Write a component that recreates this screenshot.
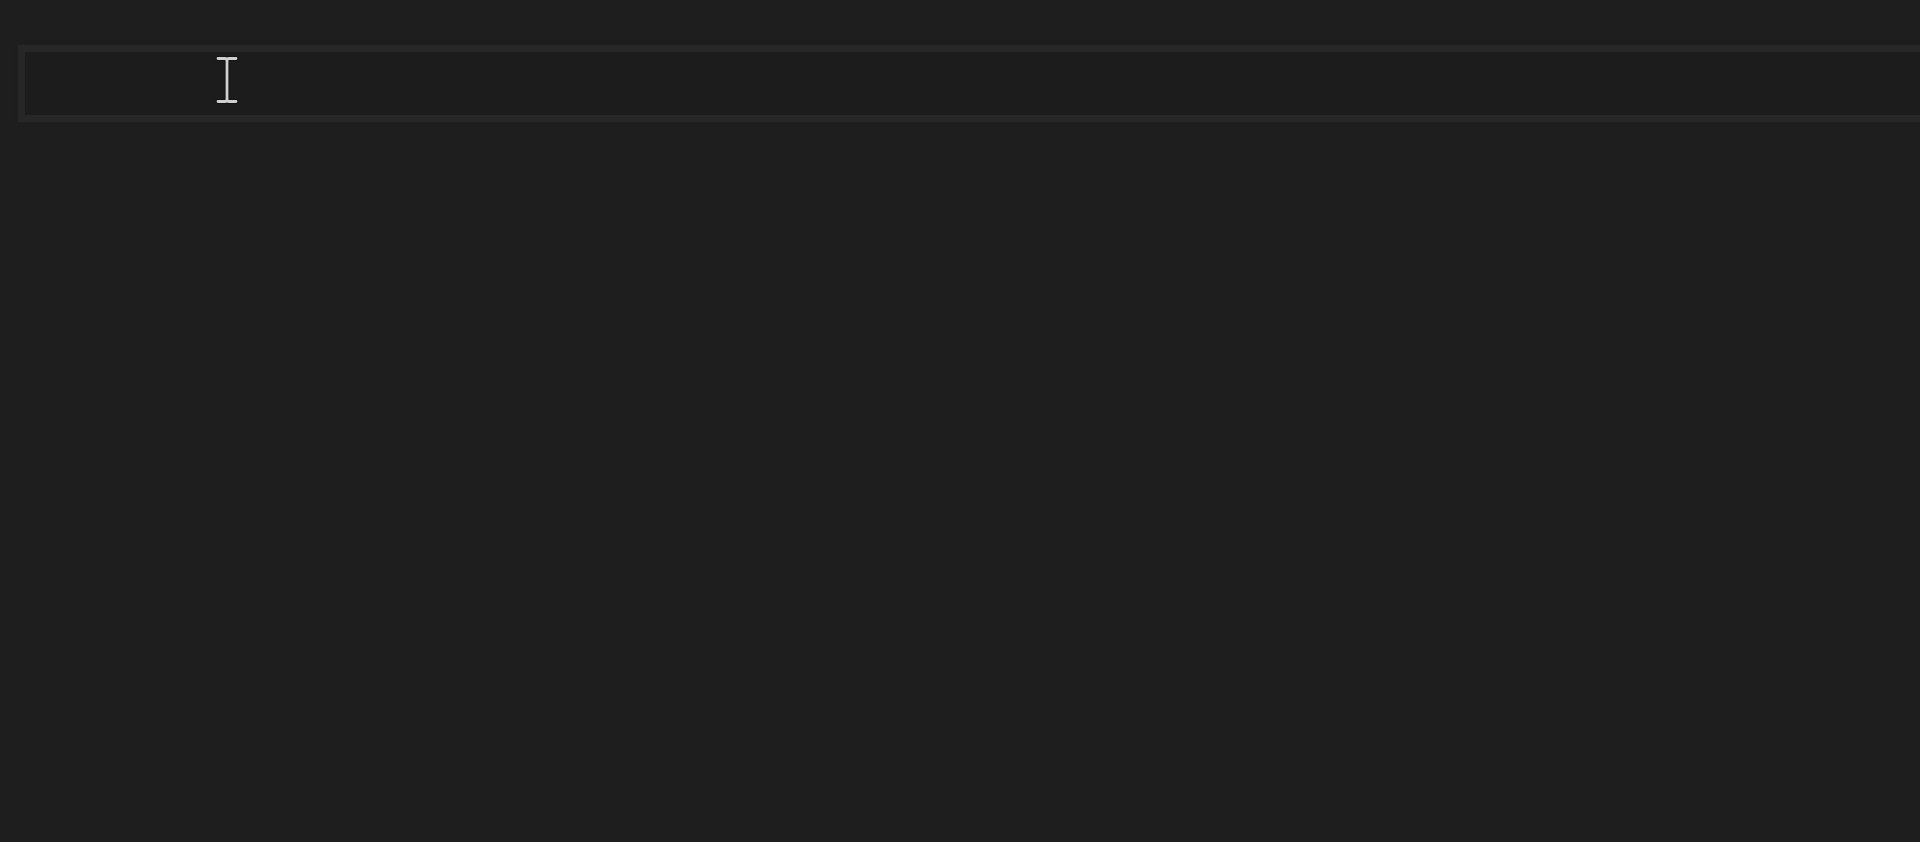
import React from 'react';

// I-beam text cursor hovering over the field
const IBeam = () => (
  <svg width="24" height="50" viewBox="0 0 24 50" className="absolute left-[215px] top-[55px]">
    <path d="M3 3.5 H10 Q12 3.5 12 6 V44 Q12 46.5 10 46.5 H3 M21 3.5 H14 Q12 3.5 12 6 M12 44 Q12 46.5 14 46.5 H21" fill="none" stroke="#141414" strokeWidth="5" strokeLinecap="round" />
    <path d="M3 3.5 H10 Q12 3.5 12 6 V44 Q12 46.5 10 46.5 H3 M21 3.5 H14 Q12 3.5 12 6 M12 44 Q12 46.5 14 46.5 H21" fill="none" stroke="#d0d0d0" strokeWidth="2.8" strokeLinecap="round" />
  </svg>
);

export default function App() {
  return (
    <div className="relative w-full h-[842px] overflow-hidden bg-[#1e1e1e]" style={{ fontFamily: 'Inter' }}>
      <div className="pt-[45px] pl-[18px] mr-[-40px]">
        <div className="h-[77px] border-[7px] border-[#272727] bg-[#1c1c1c] shadow-[0_0_2px_#242424]"></div>
      </div>
      <IBeam />
    </div>
  );
}
